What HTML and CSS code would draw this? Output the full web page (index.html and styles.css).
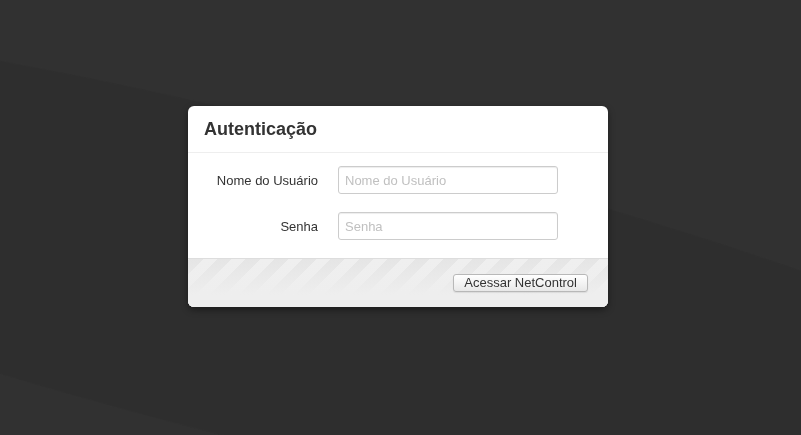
FILE: index.html
```html
<!DOCTYPE html>
<html lang="pt-BR">

<head>
    <meta charset="UTF-8">
    <meta name="viewport" content="width=device-width, initial-scale=1.0">
    <title>NetControl - Autenticação</title>

    <link rel="stylesheet" href="styles.css">
</head>

<body>
    <div class="login-modal">
        <div class="modal-header">
            <h3>Autenticação</h3>
        </div>
        <form class="modal-body">
            <div class="control-group">
                <label for="usuario">Nome do Usuário</label>
                <input type="text" id="usuario" placeholder="Nome do Usuário">
            </div>
            <div class="control-group">
                <label for="senha">Senha</label>
                <input type="password" id="senha" placeholder="Senha">
            </div>
        </form>
        <div class="modal-footer">
            <button type="button" class="btn">Acessar NetControl</button>
        </div>
    </div>
</body>

</html>
```

FILE: styles.css
```css
html, body {
    height: 100%;
}

body {
    margin: 0;
    padding: 106px 0 0 188px;
    box-sizing: border-box;
    font-family: "Liberation Sans", Arial, sans-serif;
    font-size: 13px;
    color: #333;
    background-color: #313131;
    overflow: hidden;
}

/* faixa curva sutil do fundo */
body::before {
    content: "";
    position: fixed;
    left: -700px;
    top: 130px;
    width: 2000px;
    height: 320px;
    border-radius: 50%;
    background: #2e2e2e;
    transform: rotate(14deg);
    z-index: -1;
}

.login-modal {
    position: relative;
    width: 420px;
    background: #fff;
    border-radius: 6px;
    box-shadow: 0 3px 7px rgba(0, 0, 0, 0.4);
    overflow: hidden;
}

.modal-header {
    padding: 8px 16px;
    border-bottom: 1px solid #eee;
}

.modal-header h3 {
    margin: 0;
    font-size: 18px;
    line-height: 30px;
    font-weight: bold;
    color: #333;
}

.modal-body {
    margin: 0;
    padding: 13px 0 18px;
    display: flex;
    flex-direction: column;
    gap: 18px;
}

.control-group {
    display: flex;
    align-items: center;
}

.control-group label {
    width: 130px;
    text-align: right;
    padding-top: 1px;
}

.control-group input {
    margin-left: 20px;
    width: 220px;
    height: 28px;
    box-sizing: border-box;
    padding: 0 6px;
    border: 1px solid #ccc;
    border-radius: 3px;
    box-shadow: inset 0 1px 1px rgba(0, 0, 0, 0.075);
    font-family: "Liberation Sans", Arial, sans-serif;
    font-size: 13px;
    color: #555;
    outline: none;
}

.control-group input::placeholder {
    color: #c0c0c0;
}

.modal-footer {
    height: 49px;
    box-sizing: border-box;
    padding: 15px 20px 0;
    border-top: 1px solid #ddd;
    display: flex;
    justify-content: flex-end;
    align-items: flex-start;
    background-color: #eee;
    background-image:
        linear-gradient(to bottom, rgba(238, 238, 238, 0) 0, #eee 75%),
        repeating-linear-gradient(-45deg, #e5e5e5 0, #e5e5e5 10px, #efefef 10px, #efefef 20px);
}

.btn {
    height: 18px;
    padding: 0 10px;
    border: 1px solid #b8b8b8;
    border-radius: 3px;
    background: linear-gradient(to bottom, #fff, #e8e8e8);
    box-shadow: 0 1px 1px rgba(0, 0, 0, 0.08);
    font-family: "Liberation Sans", Arial, sans-serif;
    font-size: 13px;
    line-height: 16px;
    color: #333;
    cursor: pointer;
}
```
